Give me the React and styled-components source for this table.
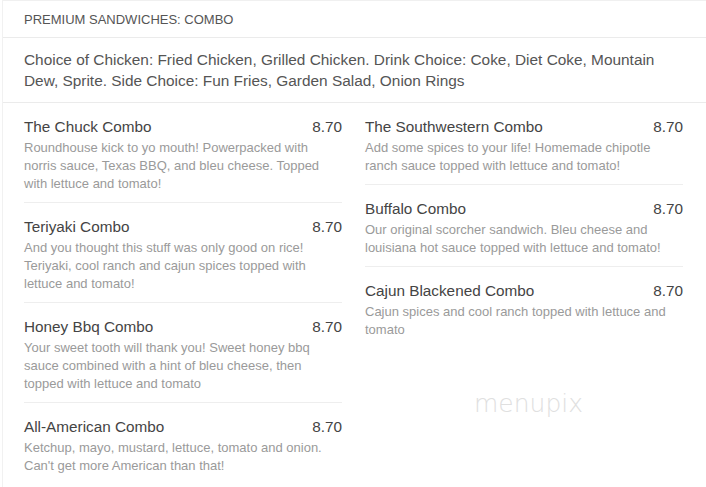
import React from "react";
import styled, { createGlobalStyle } from "styled-components";

const Global = createGlobalStyle`
	body {
		margin: 0;
		background: #fff;
		font-family: "Liberation Sans", Arial, sans-serif;
	}
`;

const Page = styled.div`
	position: relative;
	width: 706px;
	height: 487px;
	overflow: hidden;
	border-left: 1px solid #f1f1f1;
	margin-left: 2px;
	box-sizing: border-box;
`;

const SectionHeader = styled.div`
	height: 38px;
	padding: 0 23px 0 21px;
	display: flex;
	align-items: center;
	border-top: 1px solid #f0f0f0;
	border-bottom: 1px solid #ebebeb;
	box-sizing: border-box;
	font-size: 13px;
	color: #555;
	text-transform: uppercase;
`;

const Intro = styled.p`
	margin: 0;
	padding: 11px 30px 11px 21px;
	font-size: 15.4px;
	line-height: 21px;
	color: #555;
	border-bottom: 1px solid #ebebeb;
`;

const Columns = styled.div`
	display: grid;
	grid-template-columns: 318px 318px;
	column-gap: 23px;
	padding: 0 0 0 21px;
`;

const Column = styled.div`
	display: flex;
	flex-direction: column;
`;

const Item = styled.div`
	padding: 13px 0 9px;
	border-bottom: ${(p) => (p.$last ? "none" : "1px solid #eeeeee")};
`;

const ItemHead = styled.div`
	display: flex;
	justify-content: space-between;
	font-size: 15.3px;
	line-height: 22px;
	color: #444;
`;

const ItemDesc = styled.div`
	margin-top: 1px;
	font-size: 13px;
	line-height: 18px;
	color: #9a9a9a;
`;

const Watermark = styled.div`
	position: absolute;
	left: 471px;
	top: 389px;
	font-family: "DejaVu Sans", sans-serif;
	font-weight: 200;
	font-size: 25px;
	color: #e0e0e0;
`;

const left = [
	{
		name: "The Chuck Combo",
		desc: "Roundhouse kick to yo mouth! Powerpacked with norris sauce, Texas BBQ, and bleu cheese. Topped with lettuce and tomato!",
	},
	{
		name: "Teriyaki Combo",
		desc: "And you thought this stuff was only good on rice! Teriyaki, cool ranch and cajun spices topped with lettuce and tomato!",
	},
	{
		name: "Honey Bbq Combo",
		desc: "Your sweet tooth will thank you! Sweet honey bbq sauce combined with a hint of bleu cheese, then topped with lettuce and tomato",
	},
	{
		name: "All-American Combo",
		desc: "Ketchup, mayo, mustard, lettuce, tomato and onion. Can't get more American than that!",
	},
];

const right = [
	{
		name: "The Southwestern Combo",
		desc: "Add some spices to your life! Homemade chipotle ranch sauce topped with lettuce and tomato!",
	},
	{
		name: "Buffalo Combo",
		desc: "Our original scorcher sandwich. Bleu cheese and louisiana hot sauce topped with lettuce and tomato!",
	},
	{
		name: "Cajun Blackened Combo",
		desc: "Cajun spices and cool ranch topped with lettuce and tomato",
	},
];

const MenuColumn = ({ items }) => (
	<Column>
		{items.map((it, i) => (
			<Item key={it.name} $last={i === items.length - 1}>
				<ItemHead>
					<span>{it.name}</span>
					<span>8.70</span>
				</ItemHead>
				<ItemDesc>{it.desc}</ItemDesc>
			</Item>
		))}
	</Column>
);

const App = () => {
	return (
		<Page>
			<Global />
			<SectionHeader>Premium Sandwiches: Combo</SectionHeader>
			<Intro>
				Choice of Chicken: Fried Chicken, Grilled Chicken. Drink Choice: Coke, Diet Coke, Mountain Dew,
				Sprite. Side Choice: Fun Fries, Garden Salad, Onion Rings
			</Intro>
			<Columns>
				<MenuColumn items={left} />
				<MenuColumn items={right} />
			</Columns>
			<Watermark>menupix</Watermark>
		</Page>
	);
};

export default App;
